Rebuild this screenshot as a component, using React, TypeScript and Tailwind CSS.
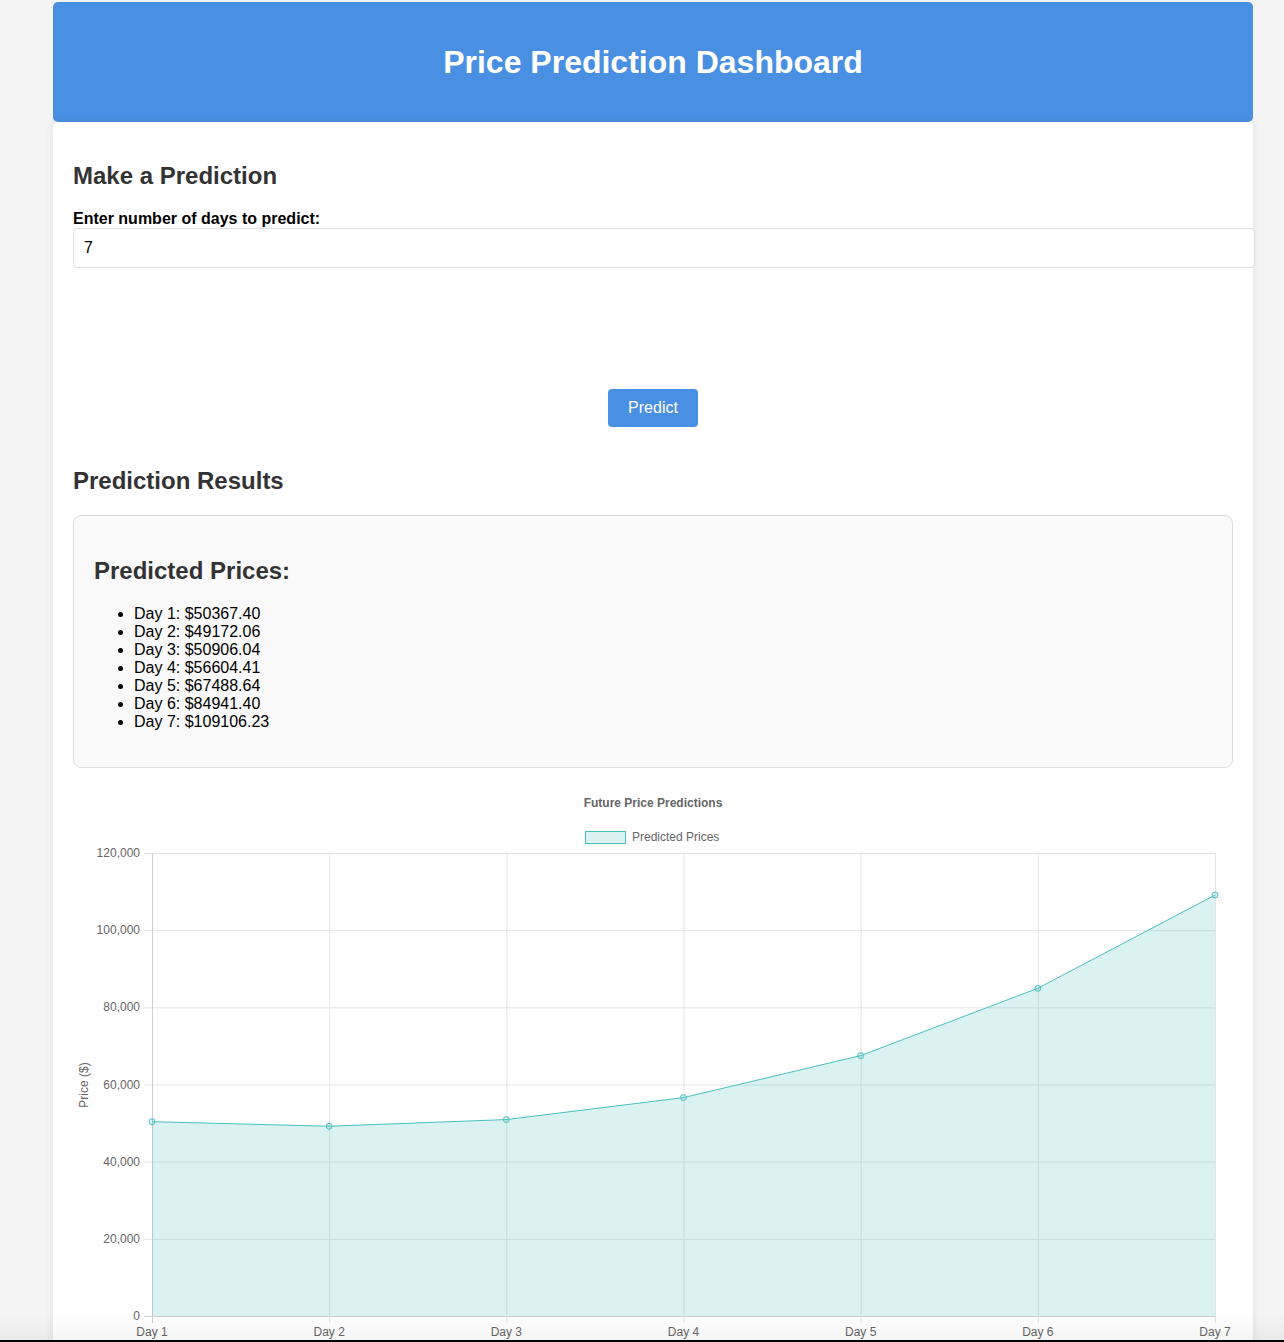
import React from "react"

const prices = [50367.4, 49172.06, 50906.04, 56604.41, 67488.64, 84941.4, 109106.23]

// plot box inside the chart svg
const PX0 = 79
const PX1 = 1142
const PY0 = 68
const PY1 = 531
const MAX = 120000

const xAt = (i: number) => PX0 + (i * (PX1 - PX0)) / (prices.length - 1)
const yAt = (v: number) => PY1 - (v / MAX) * (PY1 - PY0)

function PriceChart() {
  const ticks = [0, 20000, 40000, 60000, 80000, 100000, 120000]
  const line = prices.map((p, i) => `${i === 0 ? "M" : "L"}${xAt(i)},${yAt(p)}`).join(" ")
  const area = `${line} L${xAt(prices.length - 1)},${PY1} L${xAt(0)},${PY1} Z`

  return (
    <svg width={1160} height={580} viewBox="0 0 1160 580" className="block" style={{ fontFamily: '"Liberation Sans", Arial, sans-serif' }}>
      <text x={580} y={22} textAnchor="middle" fontSize={12} fontWeight={700} fill="#666">
        Future Price Predictions
      </text>

      {/* legend */}
      <rect x={512.5} y={46.5} width={40} height={12} fill="rgba(75,192,192,0.2)" stroke="rgb(75,192,192)" strokeWidth={1} />
      <text x={559} y={56} fontSize={12} fill="#666">
        Predicted Prices
      </text>

      {/* horizontal grid + y labels */}
      {ticks.map((t) => (
        <g key={t}>
          <line x1={71} x2={PX1} y1={yAt(t) + 0.5} y2={yAt(t) + 0.5} stroke={t === 0 ? "#cfcfcf" : "#e5e5e5"} strokeWidth={1} />
          <text x={67} y={yAt(t) + 4} textAnchor="end" fontSize={12} fill="#666">
            {t.toLocaleString("en-US")}
          </text>
        </g>
      ))}

      {/* vertical grid + x labels */}
      {prices.map((_, i) => (
        <g key={i}>
          <line x1={xAt(i) + 0.5} x2={xAt(i) + 0.5} y1={PY0} y2={PY1 + 7} stroke={i === 0 ? "#cfcfcf" : "#e5e5e5"} strokeWidth={1} />
          <text x={xAt(i)} y={551} textAnchor="middle" fontSize={12} fill="#666">
            Day {i + 1}
          </text>
        </g>
      ))}

      <text x={15} y={300} textAnchor="middle" fontSize={12} fill="#666" transform="rotate(-90 15 300)">
        Price ($)
      </text>

      <path d={area} fill="rgba(75,192,192,0.2)" />
      <path d={line} fill="none" stroke="rgb(75,192,192)" strokeWidth={1} />
      {prices.map((p, i) => (
        <circle key={i} cx={xAt(i)} cy={yAt(p)} r={3} fill="rgba(75,192,192,0.2)" stroke="rgb(75,192,192)" strokeWidth={1} />
      ))}
    </svg>
  )
}

export default function App() {
  return (
    <div className="min-h-screen bg-[#f4f4f4] pt-[2px] font-['Liberation_Sans',Arial,sans-serif] text-black">
      <div className="w-[1200px] ml-[53px]">
        <header className="bg-[#4a90e2] rounded-[5px] p-5 text-center text-white">
          <h1 className="text-[32px] leading-[37px] font-bold my-[21.5px]">Price Prediction Dashboard</h1>
        </header>

        <main className="bg-white rounded-[5px] shadow-[0_0_10px_rgba(0,0,0,0.08)] p-5">
          <section>
            <h2 className="text-[24px] leading-[28px] font-bold text-[#333] mt-5 mb-5">Make a Prediction</h2>
            <label className="block text-base leading-[18px] font-bold">Enter number of days to predict:</label>
            <input
              type="number"
              defaultValue={7}
              className="block w-[1182px] h-[40px] border border-[#ddd] rounded-[4px] px-[10px] text-base outline-none bg-white"
            />
            <div className="flex justify-center mt-[121px]">
              <button className="bg-[#4a90e2] text-white text-base leading-[18px] rounded-[4px] px-5 py-[10px]">Predict</button>
            </div>
          </section>

          <section>
            <h2 className="text-[24px] leading-[28px] font-bold text-[#333] mt-[40px] mb-5">Prediction Results</h2>
            <div className="bg-[#f9f9f9] border border-[#ddd] rounded-[8px] px-5 pt-[21px] pb-5">
              <h3 className="text-[24px] leading-[28px] font-bold text-[#333] mt-5 mb-5">Predicted Prices:</h3>
              <ul className="list-disc pl-10 mb-4 text-base leading-[18px]">
                {prices.map((p, i) => (
                  <li key={i}>
                    Day {i + 1}: ${p.toFixed(2)}
                  </li>
                ))}
              </ul>
            </div>
            <div className="mt-[17px]">
              <PriceChart />
            </div>
          </section>
        </main>
      </div>

      <div className="fixed left-0 right-0 bottom-[2px] h-[26px] pointer-events-none bg-gradient-to-b from-transparent to-black/[0.04]" />
      <div className="fixed left-0 right-0 bottom-0 h-[2px] bg-black" />
    </div>
  )
}
